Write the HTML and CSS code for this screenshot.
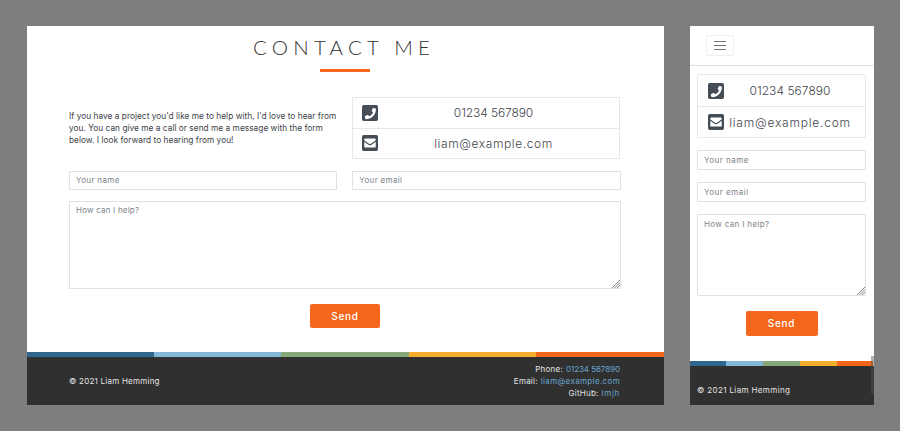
FILE: index.html
```html
<!DOCTYPE html>
<html lang="en">
<head>
<meta charset="utf-8">
<title>Contact Me</title>
<link rel="stylesheet" href="styles.css">
</head>
<body>
<svg class="defs" width="0" height="0" aria-hidden="true">
  <symbol id="phone" viewBox="0 0 448 448">
    <path d="M400 0H48A48 48 0 0 0 0 48v352a48 48 0 0 0 48 48h352a48 48 0 0 0 48-48V48a48 48 0 0 0-48-48zM94 384.600l-14-61a15 15 0 0 1 9-17l65-28a15 15 0 0 1 17.500 4.300l29 35.300a231 231 0 0 0 111-111l-35.300-29a15 15 0 0 1-4.300-17.500l28-65a15 15 0 0 1 17-9l61 14a15 15 0 0 1 11.600 15c0 150-121 280-280 280a15 15 0 0 1-15.500-11z"/>
  </symbol>
  <symbol id="mail" viewBox="0 0 448 448">
    <path d="M400 0H48A48 48 0 0 0 0 48v352a48 48 0 0 0 48 48h352a48 48 0 0 0 48-48V48a48 48 0 0 0-48-48zM178 230C88 165 87 163 64 145v-25a24 24 0 0 1 24-24h272a24 24 0 0 1 24 24v25c-23 18-24 20-114 85-10 8-31 26-46 26s-36-18-46-26zM384 186v142a24 24 0 0 1-24 24H88a24 24 0 0 1-24-24V186c24 18 33 25 95 70 14 10 38 32 65 32s51-22 65-32c62-45 71-52 95-70z"/>
  </symbol>
  <symbol id="grip" viewBox="0 0 8 8">
    <path d="M0 8L8 0M2.500 8L8 2.500M5 8L8 5" fill="none" stroke="#777" stroke-width=".9"/>
  </symbol>
</svg>
<main class="stage">
  <section class="page desktop">
    <h1 class="title"><span>CONTACT ME</span></h1>
    <div class="rule"></div>
    <div class="intro">
      <p class="copy">If you have a project you'd like me to help with, I'd love to hear from<br>you. You can give me a call or send me a message with the form<br>below. I look forward to hearing from you!</p>
      <ul class="contacts">
        <li><svg class="icon"><use href="#phone"/></svg><span class="value tel">01234 567890</span></li>
        <li><svg class="icon"><use href="#mail"/></svg><span class="value mail">liam@example.com</span></li>
      </ul>
    </div>
    <div class="fields">
      <div class="field name">Your name</div>
      <div class="field email">Your email</div>
    </div>
    <div class="field area">How can I help?<svg class="grip"><use href="#grip"/></svg></div>
    <div class="send">Send</div>
    <div class="stripe"><i></i><i></i><i></i><i></i><i></i></div>
    <footer class="footer">
      <span class="copyright">© 2021 Liam Hemming</span>
      <div class="links">
        <div class="phone-row"><span>Phone:</span><a>01234 567890</a></div>
        <div class="email-row"><span>Email:</span><a>liam@example.com</a></div>
        <div class="github-row"><span>GitHub:</span><a>lmjh</a></div>
      </div>
    </footer>
  </section>
  <section class="page mobile">
    <header class="bar"><div class="toggler"><i></i><i></i><i></i></div></header>
    <ul class="contacts">
      <li><svg class="icon"><use href="#phone"/></svg><span class="value tel">01234 567890</span></li>
      <li><svg class="icon"><use href="#mail"/></svg><span class="value mail">liam@example.com</span></li>
    </ul>
    <div class="field name">Your name</div>
    <div class="field email">Your email</div>
    <div class="field area">How can I help?<svg class="grip"><use href="#grip"/></svg></div>
    <div class="send">Send</div>
    <div class="stripe"><i></i><i></i><i></i><i></i><i></i></div>
    <footer class="footer"><span class="copyright">© 2021 Liam Hemming</span></footer>
    <div class="thumb"></div>
  </section>
</main>
</body>
</html>
```

FILE: styles.css
```css
* { box-sizing: border-box; }
body { margin: 0; background: #7e7e7e; font-family: Inter, "Liberation Sans", sans-serif; color: #3d4248; }
ul, p, h1 { margin: 0; padding: 0; list-style: none; }
.defs { position: absolute; }
.stage { display: flex; gap: 26px; height: 431px; padding: 26px 26px 26.500px 26.500px; align-items: flex-start; }
.page { background: #fff; display: flex; flex-direction: column; height: 378.500px; overflow: hidden; }
.desktop { width: 637px; }
.mobile { width: 184px; position: relative; }
span, a { white-space: nowrap; }

.title { font: 300 20.500px/24px Lato, sans-serif; height: 43px; padding-top: 9px; padding-left: 226.500px; letter-spacing: 5.200px; color: #333; }
.rule { width: 50px; height: 3px; margin-left: 293px; background: #f4661b; }
.intro { display: flex; gap: 15px; margin: 25px 43px 0 42.500px; align-items: center; }
.copy { width: 268px; font-size: 8.300px; line-height: 12px; letter-spacing: .028px; white-space: nowrap; }
.contacts { border: 1px solid #e6e8ea; }
.contacts li { display: flex; align-items: center; height: 29.500px; }
.contacts li + li { border-top: 1px solid #e6e8ea; height: 30.500px; }
.intro .contacts { width: 268px; height: 62px; }
.icon { width: 16px; height: 16px; fill: #454d56; margin-left: 9px; flex: none; }
.value { flex: 1; margin-right: 10px; text-align: center; font-size: 12px; font-weight: 300; color: #3f464d; }
.tel { letter-spacing: -.1px; }
.mail { letter-spacing: .6px; }
.fields { display: flex; gap: 15px; margin: 11.500px 43px 0 42.500px; }
.field { flex: 1; height: 19px; border: 1px solid #dfe2e5; padding-left: 6px; font-size: 8px; line-height: 17px; letter-spacing: .35px; color: #7b838a; }
.area { flex: none; position: relative; height: 87.500px; margin: 11.500px 43px 0 42.500px; letter-spacing: .2px; }
.grip { position: absolute; right: 0; bottom: 0; width: 8px; height: 8px; }
.send { align-self: center; width: 70px; height: 24px; margin: 15px 0 24.500px; border-radius: 2px; background: #f4661b; color: #fff; font-size: 10px; font-weight: 500; line-height: 24px; text-align: center; letter-spacing: .75px; }
.stripe { display: flex; height: 5px; flex: none; }
.stripe i { flex: 1; background: #2f6690; }
.stripe i:nth-child(2) { background: #81b8d8; }
.stripe i:nth-child(3) { background: #87a878; }
.stripe i:nth-child(4) { background: #f3ae2e; }
.stripe i:nth-child(5) { background: #f4661b; }
.footer { flex: 1; display: flex; align-items: center; justify-content: space-between; padding: 0 43.500px 0 42.500px; background: #303030; color: #e4e4e4; font-size: 8px; line-height: 12px; letter-spacing: .235px; }
.links div { display: flex; justify-content: flex-end; gap: 3px; }
.links a { color: #6aa5cd; }
.phone-row a { letter-spacing: -.06px; }
.email-row a { letter-spacing: .35px; }
.github-row a { letter-spacing: .7px; }

.bar { height: 40px; border-bottom: 1px solid #dcdcdc; padding: 9px 0 0 16px; }
.toggler { width: 28px; height: 21px; border: 1px solid #f0f0f0; border-radius: 2px; display: flex; flex-direction: column; align-items: center; justify-content: center; gap: 3.300px; }
.toggler i { width: 12px; height: 1px; background: #777; }
.mobile .contacts { width: 169px; height: 64px; margin: 8px 0 12px 7.500px; border-radius: 2px; }
.mobile .contacts li { height: 31px; }
.mobile .icon { margin-left: 10px; }
.mobile .value { margin-right: 9px; }
.mobile .tel { letter-spacing: .05px; }
.mobile .mail { letter-spacing: .78px; }
.mobile .field { flex: none; width: 169px; height: 20px; margin: 0 0 12px 7.500px; border-radius: 2px; line-height: 18px; letter-spacing: .5px; }
.mobile .area { height: 82px; margin-bottom: 0; letter-spacing: .34px; }
.mobile .send { width: 72px; height: 25px; margin: 14.500px 0 25.500px; }
.mobile .footer { padding: 10px 7.500px 0; letter-spacing: .37px; }
.thumb { position: absolute; right: 0; bottom: 11px; width: 3px; height: 38px; background: rgba(80,80,80,.45); }
```
